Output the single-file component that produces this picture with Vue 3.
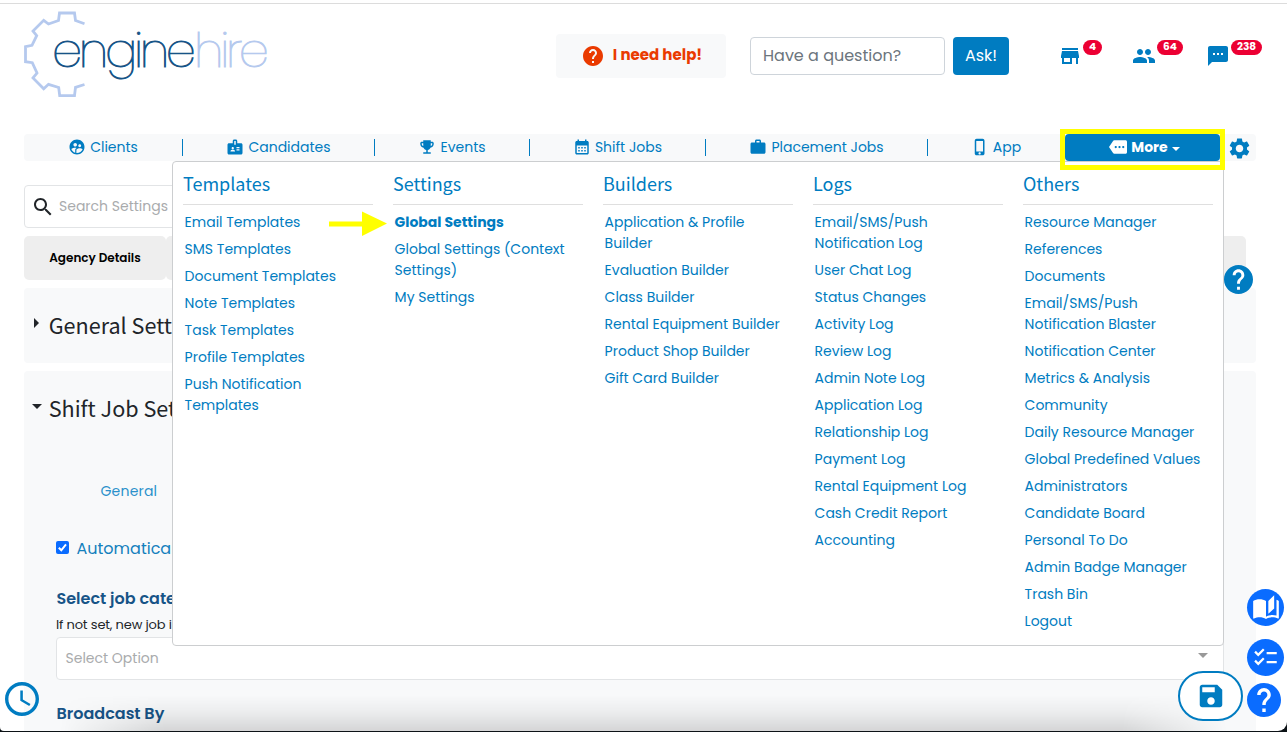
<template>
  <div class="page">
    <header class="header">
      <svg class="logo" viewBox="0 0 250 92" width="250" height="92">
        <path
            class="logo-gear"
            d="M60.5 14.7 51.5 11.5 50.5 4H35.5L34.5 11.5 24.5 15 19.7 11.3 9 22 12.7 26.7 8 36.3 1.5 37.7V52.7L8.3 53.7 13 64 9 69 19.7 79.7 24.5 75.3 34.7 78.5 35.7 86.7H50.5L51.5 78.3 60.5 75.5"
        />
        <text class="logo-engine" x="28" y="58" textLength="144">engine</text>
        <text class="logo-hire" x="170" y="58" textLength="75">hire</text>
      </svg>

      <button class="help-btn">
        <svg viewBox="0 0 24 24" width="24" height="24"><path :d="icons.help" /></svg>
        <span>I need help!</span>
      </button>

      <div class="ask">
        <input class="ask-input" type="text" placeholder="Have a question?" />
        <button class="ask-btn">Ask!</button>
      </div>

      <div class="notices">
        <div v-for="n in notices" :key="n.icon" class="notice">
          <svg viewBox="0 0 24 24" width="24" height="24"><path :d="icons[n.icon]" /></svg>
          <span class="badge">{{ n.count }}</span>
        </div>
      </div>
    </header>

    <nav class="nav">
      <a v-for="item in navItems" :key="item.text" class="nav-item">
        <svg viewBox="0 0 24 24" width="18" height="18"><path :d="icons[item.icon]" /></svg>
        <span>{{ item.text }}</span>
      </a>
      <a class="nav-item nav-more">
        <svg viewBox="0 0 24 24" width="18" height="18"><path :d="icons.more" /></svg>
        <span>More</span>
        <i class="caret"></i>
      </a>
      <a class="nav-gear">
        <svg viewBox="0 0 24 24" width="25" height="25"><path :d="icons.settings" /></svg>
      </a>
    </nav>

    <main class="content">
      <div class="search">
        <svg viewBox="0 0 24 24" width="24" height="24"><path :d="icons.search" /></svg>
        <span>Search Settings</span>
      </div>

      <div class="tabs">
        <div class="tab">Agency Details</div>
        <div class="tab tab-rest"></div>
      </div>

      <section class="panel panel-closed">
        <h2 class="panel-title"><i class="arrow-right"></i>General Sett</h2>
      </section>

      <section class="panel panel-open">
        <h2 class="panel-title"><i class="arrow-down"></i>Shift Job Set</h2>
        <div class="sub-tab">General</div>
        <label class="check">
          <span class="check-box">
            <svg viewBox="0 0 13 13" width="13" height="13"><path d="M2.8 6.8 5.3 9.3 10 3.4" /></svg>
          </span>
          Automatical
        </label>
        <h3 class="field-title">Select job cate</h3>
        <p class="field-note">If not set, new job i</p>
        <div class="select">
          <span>Select Option</span>
          <i class="select-arrow"></i>
        </div>
        <h3 class="field-title broadcast">Broadcast By</h3>
      </section>
    </main>

    <!-- mega menu -->
    <div class="menu">
      <div v-for="col in menu" :key="col.title" class="menu-col">
        <h4 class="menu-title">{{ col.title }}</h4>
        <ul class="menu-list">
          <li v-for="link in col.links" :key="link" :class="{ active: link === 'Global Settings' }">
            <template v-for="(line, i) in link.split('|')" :key="line"><br v-if="i" />{{ line }}</template>
          </li>
        </ul>
      </div>
    </div>

    <div class="highlight"></div>
    <svg class="pointer" viewBox="0 0 58 26" width="58" height="26">
      <path d="M0 10.5H33V0.5L58 12.5 33 25V15.5H0z" />
    </svg>

    <div class="bottom-shade"></div>

    <!-- floating buttons -->
    <div class="float page-help">
      <svg viewBox="2 2 20 20" width="29" height="29"><path :d="icons.help" /></svg>
    </div>
    <div class="float clock">
      <svg viewBox="2 2 20 20" width="34" height="34"><path :d="icons.clock" /></svg>
    </div>
    <div class="float save">
      <svg viewBox="0 0 24 24" width="30" height="30"><path :d="icons.save" /></svg>
    </div>
    <div class="float round book">
      <svg viewBox="0 0 24 24" width="28" height="28"><path :d="icons.book" /></svg>
    </div>
    <div class="float round checklist">
      <svg viewBox="0 0 24 24" width="27" height="27"><path :d="icons.checklist" /></svg>
    </div>
    <div class="float support">
      <svg viewBox="2 2 20 20" width="34" height="34"><path :d="icons.help" /></svg>
    </div>
  </div>
</template>

<script setup>
const icons = {
  help: 'M12 2C6.48 2 2 6.48 2 12s4.48 10 10 10 10-4.48 10-10S17.52 2 12 2zm1 17h-2v-2h2v2zm2.07-7.75l-.9.92C13.45 12.9 13 13.5 13 15h-2v-.5c0-1.1.45-2.1 1.17-2.83l1.24-1.26c.37-.36.59-.86.59-1.41 0-1.1-.9-2-2-2s-2 .9-2 2H8c0-2.21 1.79-4 4-4s4 1.79 4 4c0 .88-.36 1.68-.93 2.25z',
  store: 'M20 4H4v2h16V4zm1 10v-2l-1-5H4l-1 5v2h1v6h10v-6h4v6h2v-6h1zm-9 4H6v-4h6v4z',
  people: 'M16 11c1.66 0 2.99-1.34 2.99-3S17.66 5 16 5c-1.66 0-3 1.34-3 3s1.34 3 3 3zm-8 0c1.66 0 2.99-1.34 2.99-3S9.66 5 8 5C6.34 5 5 6.34 5 8s1.34 3 3 3zm0 2c-2.33 0-7 1.17-7 3.5V19h14v-2.5c0-2.33-4.67-3.5-7-3.5zm8 0c-.29 0-.62.02-.97.05 1.16.84 1.97 1.97 1.97 3.45V19h6v-2.5c0-2.33-4.67-3.5-7-3.5z',
  sms: 'M20 2H4c-1.1 0-1.99.9-1.99 2L2 22l4-4h14c1.1 0 2-.9 2-2V4c0-1.1-.9-2-2-2zM9 11H7V9h2v2zm4 0h-2V9h2v2zm4 0h-2V9h2v2z',
  clients: 'M11.99 2c-5.52 0-10 4.48-10 10s4.48 10 10 10 10-4.48 10-10-4.48-10-10-10zm3.61 6.34c1.07 0 1.93.86 1.93 1.93 0 1.07-.86 1.93-1.93 1.93-1.07 0-1.93-.86-1.93-1.93-.01-1.07.86-1.93 1.93-1.93zm-6-1.58c1.3 0 2.36 1.06 2.36 2.36 0 1.3-1.06 2.36-2.36 2.36s-2.36-1.06-2.36-2.36c0-1.31 1.05-2.36 2.36-2.36zm0 9.13v3.75c-2.4-.75-4.3-2.6-5.14-4.96 1.05-1.12 3.67-1.69 5.14-1.69.53 0 1.2.08 1.9.22-1.64.87-1.9 2.02-1.9 2.68zM11.99 20c-.27 0-.53-.01-.79-.04v-4.07c0-1.42 2.94-2.13 4.4-2.13 1.07 0 2.92.39 3.84 1.15-1.17 2.97-4.06 5.09-7.45 5.09z',
  badge: 'M20 7h-5V4c0-1.1-.9-2-2-2h-2c-1.1 0-2 .9-2 2v3H4c-1.1 0-2 .9-2 2v11c0 1.1.9 2 2 2h16c1.1 0 2-.9 2-2V9c0-1.1-.9-2-2-2zM9 12c.83 0 1.5.67 1.5 1.5S9.83 15 9 15s-1.5-.67-1.5-1.5S8.17 12 9 12zm3 6H6v-.75c0-1 2-1.5 3-1.5s3 .5 3 1.5V18zm1-9h-2V4h2v5zm5 7.5h-4V15h4v1.5zm0-3h-4V12h4v1.5z',
  trophy: 'M19 5h-2V3H7v2H5c-1.1 0-2 .9-2 2v1c0 2.55 1.92 4.63 4.39 4.94.63 1.5 1.98 2.63 3.61 2.96V19H7v2h10v-2h-4v-3.1c1.63-.33 2.98-1.46 3.61-2.96C19.08 12.63 21 10.55 21 8V7c0-1.1-.9-2-2-2zM5 8V7h2v3.82C5.84 10.4 5 9.3 5 8zm14 0c0 1.3-.84 2.4-2 2.82V7h2v1z',
  calendar: 'M19 4h-1V2h-2v2H8V2H6v2H5c-1.11 0-1.99.9-1.99 2L3 20c0 1.1.89 2 2 2h14c1.1 0 2-.9 2-2V6c0-1.1-.9-2-2-2zm0 16H5V10h14v10zM9 14H7v-2h2v2zm4 0h-2v-2h2v2zm4 0h-2v-2h2v2zm-8 4H7v-2h2v2zm4 0h-2v-2h2v2zm4 0h-2v-2h2v2z',
  work: 'M20 6h-4V4c0-1.11-.89-2-2-2h-4c-1.11 0-2 .89-2 2v2H4c-1.11 0-1.99.89-1.99 2L2 19c0 1.11.89 2 2 2h16c1.11 0 2-.89 2-2V8c0-1.11-.89-2-2-2zm-6 0h-4V4h4v2z',
  phone: 'M15.5 1h-8C6.12 1 5 2.12 5 3.5v17C5 21.88 6.12 23 7.5 23h8c1.38 0 2.5-1.12 2.5-2.5v-17C18 2.12 16.88 1 15.5 1zm-4 21c-.83 0-1.5-.67-1.5-1.5s.67-1.5 1.5-1.5 1.5.67 1.5 1.5-.67 1.5-1.5 1.5zm4.5-4H7V4h9v14z',
  more: 'M22 3H7c-.69 0-1.23.35-1.59.88L0 12l5.41 8.11c.36.53.97.89 1.66.89H22c1.1 0 2-.9 2-2V5c0-1.1-.9-2-2-2zM9 13.5c-.83 0-1.5-.67-1.5-1.5s.67-1.5 1.5-1.5 1.5.67 1.5 1.5-.67 1.5-1.5 1.5zm5 0c-.83 0-1.5-.67-1.5-1.5s.67-1.5 1.5-1.5 1.5.67 1.5 1.5-.67 1.5-1.5 1.5zm5 0c-.83 0-1.5-.67-1.5-1.5s.67-1.5 1.5-1.5 1.5.67 1.5 1.5-.67 1.5-1.5 1.5z',
  settings: 'M19.14 12.94c.04-.3.06-.61.06-.94 0-.32-.02-.64-.07-.94l2.03-1.58c.18-.14.23-.41.12-.61l-1.92-3.32c-.12-.22-.37-.29-.59-.22l-2.39.96c-.5-.38-1.03-.7-1.62-.94l-.36-2.54c-.04-.24-.24-.41-.48-.41h-3.84c-.24 0-.43.17-.47.41l-.36 2.54c-.59.24-1.13.57-1.62.94l-2.39-.96c-.22-.08-.47 0-.59.22L2.74 8.87c-.12.21-.08.47.12.61l2.03 1.58c-.05.3-.09.63-.09.94s.02.64.07.94l-2.03 1.58c-.18.14-.23.41-.12.61l1.92 3.32c.12.22.37.29.59.22l2.39-.96c.5.38 1.03.7 1.62.94l.36 2.54c.05.24.24.41.48.41h3.84c.24 0 .44-.17.47-.41l.36-2.54c.59-.24 1.13-.56 1.62-.94l2.39.96c.22.08.47 0 .59-.22l1.92-3.32c.12-.22.07-.47-.12-.61l-2.01-1.58zM12 15.6c-1.98 0-3.6-1.62-3.6-3.6s1.62-3.6 3.6-3.6 3.6 1.62 3.6 3.6-1.62 3.6-3.6 3.6z',
  search: 'M15.5 14h-.79l-.28-.27C15.41 12.59 16 11.11 16 9.5 16 5.91 13.09 3 9.5 3S3 5.91 3 9.5 5.91 16 9.5 16c1.61 0 3.09-.59 4.23-1.57l.27.28v.79l5 4.99L20.49 19l-4.99-5zm-6 0C7.01 14 5 11.99 5 9.5S7.01 5 9.5 5 14 7.01 14 9.5 11.99 14 9.5 14z',
  save: 'M17 3H5c-1.11 0-2 .9-2 2v14c0 1.1.89 2 2 2h14c1.1 0 2-.9 2-2V7l-4-4zm-5 16c-1.66 0-3-1.34-3-3s1.34-3 3-3 3 1.34 3 3-1.34 3-3 3zm3-10H5V5h10v4z',
  clock: 'M11.99 2C6.47 2 2 6.48 2 12s4.47 10 9.99 10C17.52 22 22 17.52 22 12S17.52 2 11.99 2zM12 20c-4.42 0-8-3.58-8-8s3.58-8 8-8 8 3.58 8 8-3.58 8-8 8zm.5-13H11v6l5.25 3.15.75-1.23-4.5-2.67z',
  book: 'M19 1l-5 5v11l5-4.5V1zM1 6v14.65c0 .25.25.5.5.5.1 0 .15-.05.25-.05C3.1 20.45 5.05 20 6.5 20c1.95 0 4.05.4 5.5 1.5V6c-1.45-1.1-3.55-1.5-5.5-1.5S2.45 4.9 1 6zm22 13.5V6c-.6-.45-1.25-.75-2-1v13.5c-1.1-.35-2.3-.5-3.5-.5-1.7 0-4.15.65-5.5 1.5v2c1.35-.85 3.8-1.5 5.5-1.5 1.65 0 3.35.3 4.75 1.05.1.05.15.05.25.05.25 0 .5-.25.5-.5v-1.1z',
  checklist: 'M22 7h-9v2h9V7zm0 8h-9v2h9v-2zM5.54 11L2 7.46l1.41-1.41 2.12 2.12 4.24-4.24 1.41 1.41L5.54 11zm0 8L2 15.46l1.41-1.41 2.12 2.12 4.24-4.24 1.41 1.41L5.54 19z'
};

const notices = [
  { icon: 'store', count: 4 },
  { icon: 'people', count: 64 },
  { icon: 'sms', count: 238 }
];

const navItems = [
  { icon: 'clients', text: 'Clients' },
  { icon: 'badge', text: 'Candidates' },
  { icon: 'trophy', text: 'Events' },
  { icon: 'calendar', text: 'Shift Jobs' },
  { icon: 'work', text: 'Placement Jobs' },
  { icon: 'phone', text: 'App' }
];

// "|" marks a line break inside a link
const menu = [
  {
    title: 'Templates',
    links: ['Email Templates', 'SMS Templates', 'Document Templates', 'Note Templates', 'Task Templates', 'Profile Templates', 'Push Notification|Templates']
  },
  {
    title: 'Settings',
    links: ['Global Settings', 'Global Settings (Context|Settings)', 'My Settings']
  },
  {
    title: 'Builders',
    links: ['Application & Profile|Builder', 'Evaluation Builder', 'Class Builder', 'Rental Equipment Builder', 'Product Shop Builder', 'Gift Card Builder']
  },
  {
    title: 'Logs',
    links: ['Email/SMS/Push|Notification Log', 'User Chat Log', 'Status Changes', 'Activity Log', 'Review Log', 'Admin Note Log', 'Application Log', 'Relationship Log', 'Payment Log', 'Rental Equipment Log', 'Cash Credit Report', 'Accounting']
  },
  {
    title: 'Others',
    links: ['Resource Manager', 'References', 'Documents', 'Email/SMS/Push|Notification Blaster', 'Notification Center', 'Metrics & Analysis', 'Community', 'Daily Resource Manager', 'Global Predefined Values', 'Administrators', 'Candidate Board', 'Personal To Do', 'Admin Badge Manager', 'Trash Bin', 'Logout']
  }
];
</script>

<style>
body {
  background: #0c1216;
}
</style>

<style scoped>
* {
  box-sizing: border-box;
}

.page {
  position: relative;
  height: 731px;
  padding-top: 3px;
  overflow: hidden;
  border-radius: 0 0 9px 4px;
  background: #fff;
  font-family: Poppins, Inter, sans-serif;
  font-size: 14px;
  color: #212529;
}

svg {
  display: block;
  flex: none;
  fill: currentColor;
}

button {
  border: 0;
  font-family: inherit;
}

h2,
h3,
h4,
p,
ul {
  margin: 0;
  padding: 0;
  font-weight: 400;
}

/* header */
.header {
  display: flex;
  height: 131px;
  padding-left: 24px;
  border-top: 1px solid #dcdcdc;
}

.logo {
  margin-top: 5px;
}

.logo-gear {
  fill: none;
  stroke: #b5c9ee;
  stroke-width: 2.8;
}

.logo text {
  font-family: Poppins, Lato, sans-serif;
  font-size: 48px;
  font-weight: 200;
  stroke-width: 0.9;
}

.logo-engine {
  fill: #175487;
  stroke: #175487;
}

.logo-hire {
  fill: #b5c9ee;
  stroke: #b5c9ee;
}

.help-btn {
  display: flex;
  align-items: center;
  justify-content: center;
  gap: 8px;
  width: 170px;
  height: 44px;
  margin: 30px 24px 0 282px;
  padding: 0 0 1px 1px;
  border-radius: 4px;
  background: #f8f9fa;
  color: #ea3a00;
  font-size: 15px;
  font-weight: 700;
}

.help-btn span {
  margin-top: -2px;
}

.ask {
  display: flex;
  gap: 8px;
  height: 38px;
  margin-top: 33px;
}

.ask-input {
  width: 195px;
  padding: 0 12px 2px;
  border: 1px solid #ced4da;
  border-radius: 4px;
  font-family: inherit;
  font-size: 16px;
}

.ask-input::placeholder {
  color: #6c757d;
  opacity: 1;
}

.ask-btn {
  width: 56px;
  padding: 0 0 2px;
  border-radius: 4px;
  background: #007cc1;
  color: #fff;
  font-size: 16px;
}

.notices {
  display: flex;
  margin: 36px 0 0 49px;
  color: #007cc1;
}

.notice {
  display: flex;
  gap: 1px;
  width: 74px;
}

.notice svg {
  margin-top: 4px;
}

.badge {
  height: 15px;
  padding: 0 6px;
  border-radius: 8px;
  background: #ec0033;
  color: #fff;
  font-size: 10.5px;
  font-weight: 700;
  line-height: 14px;
}

/* nav */
.nav {
  display: grid;
  grid-template-columns: 159px 192px 155px 176px 222px 137px 155px 36px;
  width: 1232px;
  height: 27px;
  margin-left: 24px;
  border-radius: 4px;
  background: #f8f9fa;
  color: #007cc1;
}

.nav-item {
  position: relative;
  display: flex;
  align-items: center;
  justify-content: center;
  gap: 4px;
  padding-right: 1px;
}

.nav-item svg {
  margin-top: -2px;
}

.nav-item:nth-child(-n + 5)::after {
  content: '';
  position: absolute;
  top: 5px;
  right: 0;
  width: 1px;
  height: 17px;
  background: #007cc1;
}

.nav-more {
  padding: 0 0 0 4px;
  border-radius: 4px;
  background: #007cc1;
  color: #fff;
  font-weight: 700;
}

.caret {
  margin-top: 2px;
  border: 4px solid transparent;
  border-top-color: currentColor;
  border-bottom: 0;
}

.nav-gear {
  display: flex;
  align-items: center;
  padding: 1px 0 0 7px;
}

/* settings page */
.content {
  width: 1232px;
  margin: 24px 0 0 24px;
}

.search {
  display: flex;
  align-items: center;
  gap: 4.5px;
  width: 1180px;
  height: 43px;
  padding-left: 5.5px;
  border: 1px solid #e2e4e6;
  border-radius: 4px;
  color: #212529;
}

.search span {
  color: #a9abad;
}

.tabs {
  display: flex;
  width: 1222px;
  margin-top: 8px;
}

.tab {
  width: 142px;
  height: 44px;
  border-radius: 5px;
  background: #eee;
  color: #000;
  font-size: 12px;
  font-weight: 600;
  line-height: 44px;
  text-align: center;
}

.tab-rest {
  flex: 1;
}

.panel {
  margin-top: 8px;
  padding: 17px 32px;
  border-radius: 4px;
  background: #f8f9fa;
}

.panel-closed {
  height: 75px;
}

.panel-open {
  height: 400px;
}

.panel-title {
  display: flex;
  align-items: center;
  height: 38px;
  margin-left: -24px;
  font-family: 'Source Sans Pro', 'Noto Sans CJK SC', sans-serif;
  font-size: 21.6px;
  white-space: nowrap;
}

.arrow-right {
  margin: -2px 9.7px 0 2px;
  border: 5px solid transparent;
  border-left-color: currentColor;
  border-right: 0;
}

.arrow-down {
  margin: -2px 6.7px 0 0;
  border: 5px solid transparent;
  border-top-color: currentColor;
  border-bottom: 0;
}

.sub-tab {
  margin: 53px 0 0 44.5px;
  color: #2b91cb;
  letter-spacing: 0.2px;
  line-height: 24px;
}

.check {
  display: flex;
  align-items: center;
  gap: 7.5px;
  height: 24px;
  margin-top: 33px;
  color: #1480bd;
  font-size: 16px;
}

.check-box {
  margin-top: -2px;
  border-radius: 2px;
  background: #0a6cff;
}

.check-box path {
  fill: none;
  stroke: #fff;
  stroke-width: 2;
}

.field-title {
  margin-top: 27px;
  padding-left: 0.5px;
  color: #175487;
  font-size: 16px;
  font-weight: 600;
  line-height: 24px;
}

.field-note {
  margin-top: 4px;
  font-size: 13px;
  line-height: 20px;
  letter-spacing: -0.15px;
}

.select {
  display: flex;
  align-items: center;
  justify-content: space-between;
  height: 43px;
  margin-top: 2px;
  padding: 0 15px 0 8.5px;
  border: 1px solid #e2e4e6;
  border-radius: 4px;
  background: #fff;
  color: #a9abad;
}

.select-arrow {
  margin-top: -6px;
  border: 5px solid transparent;
  border-top-color: #999;
  border-bottom: 0;
}

.broadcast {
  margin-top: 22px;
}

/* mega menu */
.menu {
  position: absolute;
  top: 161px;
  left: 172px;
  display: grid;
  grid-template-columns: repeat(5, 190px);
  column-gap: 20px;
  width: 1052px;
  height: 485px;
  padding: 0 10px;
  border: 1px solid #ccced0;
  border-radius: 4px;
  background: #fff;
  color: #007cc1;
}

.menu-title {
  height: 43px;
  border-bottom: 1px solid #dfdfdf;
  font-family: 'Source Sans Pro', 'Noto Sans CJK SC', sans-serif;
  font-size: 18px;
  line-height: 42px;
}

.menu-list {
  display: flex;
  flex-direction: column;
  gap: 6px;
  padding: 7px 0 0 1.6px;
  list-style: none;
  line-height: 21px;
  white-space: nowrap;
}

.active {
  font-weight: 700;
}

.highlight {
  position: absolute;
  top: 129px;
  left: 1060px;
  width: 165px;
  height: 41px;
  border: 5px solid #ff0;
}

.pointer {
  position: absolute;
  top: 211px;
  left: 329px;
  fill: #ff0;
}

.bottom-shade {
  position: absolute;
  right: 60px;
  bottom: 0;
  left: 60px;
  height: 36px;
  background: linear-gradient(to top, rgba(0, 0, 0, 0.14), rgba(0, 0, 0, 0.05) 50%, transparent);
  mask-image: linear-gradient(to right, transparent, #000 9%, #000 91%, transparent);
}

/* floating buttons */
.float {
  position: absolute;
  display: flex;
  align-items: center;
  justify-content: center;
  border-radius: 50%;
  color: #007cc1;
}

.page-help {
  top: 264.5px;
  left: 1224px;
  background: radial-gradient(#fff 60%, transparent 62%);
}

.clock {
  top: 682px;
  left: 5px;
}

.save {
  top: 671px;
  left: 1178px;
  width: 65px;
  height: 50px;
  border: 2px solid #007cc1;
  border-radius: 25px;
  background: #fff;
}

.round {
  left: 1247px;
  width: 37px;
  height: 37px;
  background: #0a6cff;
  color: #fff;
}

.book {
  top: 589px;
}

.checklist {
  top: 639px;
}

.support {
  top: 683px;
  left: 1247px;
  background: radial-gradient(#fff 60%, transparent 62%);
  color: #0a6cff;
}
</style>
